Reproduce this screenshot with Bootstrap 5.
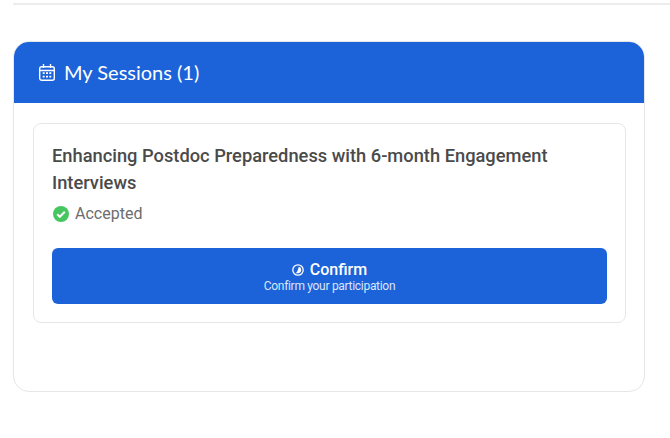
<!doctype html>
<html lang="en">

<head>
  <meta charset="utf-8">
  <meta name="viewport" content="width=device-width, initial-scale=1">
  <title>My Sessions</title>
  <link href="https://cdn.jsdelivr.net/npm/bootstrap@5.3.3/dist/css/bootstrap.min.css" rel="stylesheet">
  <style>
    body {
      font-family: "Roboto", "Liberation Sans", sans-serif;
      color: #4a4a4a;
      background: #fff;
      overflow: hidden;
    }

    .top-rule {
      height: 2px;
      margin: 3px 0 36px 13px;
      background: #ececec;
    }

    .sessions-card {
      width: 632px;
      height: 351px;
      margin-left: 13px;
      border: 1.5px solid #e6e6e6;
      border-radius: 16px;
      overflow: hidden;
    }

    .sessions-head {
      height: 61px;
      padding-left: 25px;
      background: #1c62d9;
      color: #fff;
      font-family: "Lato", "Liberation Sans", sans-serif;
      font-size: 20px;
      gap: 9px;
    }

    .sessions-head span {
      padding-bottom: 2px;
    }

    .session-item {
      margin: 20px 18px 0 19px;
      padding: 18px;
      border: 1.5px solid #e6e6e6;
      border-radius: 8px;
    }

    .session-title {
      margin: 0;
      font-size: 18.3px;
      line-height: 27px;
      font-weight: 500;
      color: #4a4a4a;
    }

    .session-status {
      margin-top: 5px;
      margin-bottom: 21px;
      padding-left: 1px;
      gap: 6px;
      font-size: 16px;
      line-height: 26px;
      color: #6d6d6d;
    }

    .confirm-btn {
      height: 56px;
      padding: 2px 0 0;
      background: #1c62d9;
      border: 0;
      border-radius: 6px;
      color: #fff;
      line-height: 1;
    }

    .confirm-btn:hover {
      background: #1c62d9;
      color: #fff;
    }

    .confirm-main {
      gap: 6px;
      padding-top: 4px;
      font-size: 16px;
      font-weight: 500;
      line-height: 16px;
    }

    .confirm-sub {
      margin-bottom: 2px;
      font-size: 12px;
      letter-spacing: -.3px;
      line-height: 16px;
      color: #dbe6fa;
    }
  </style>
</head>

<body>
  <div class="top-rule"></div>

  <div class="sessions-card bg-white">
    <div class="sessions-head d-flex align-items-center">
      <svg width="16" height="17" viewBox="0 0 16 17" fill="none" stroke="#fff" stroke-width="1.4">
        <rect x=".7" y="2.7" width="14.6" height="13.6" rx="2"></rect>
        <path d="M.7 6.5h14.6M4.5 0v4M11.5 0v4"></path>
        <path d="M3.7 9.2h2M7 9.2h2M10.3 9.2h2M3.7 12.6h2M7 12.6h2M10.3 12.6h2" stroke-width="1.8"></path>
      </svg>
      <span>My Sessions (1)</span>
    </div>

    <div class="session-item">
      <h5 class="session-title">Enhancing Postdoc Preparedness with 6-month Engagement Interviews</h5>
      <div class="session-status d-flex align-items-center">
        <svg width="16" height="16" viewBox="0 0 16 16">
          <circle cx="8" cy="8" r="8" fill="#45c65f"></circle>
          <path d="M4.2 8.3l2.6 2.5 5-5" fill="none" stroke="#fff" stroke-width="2"></path>
        </svg>
        <span>Accepted</span>
      </div>
      <button type="button" class="btn confirm-btn w-100 d-flex flex-column justify-content-center align-items-center">
        <span class="confirm-main d-flex align-items-center">
          <svg width="12" height="12" viewBox="0 0 12 12">
            <circle cx="6" cy="6" r="5.2" fill="none" stroke="#fff" stroke-width="1.3"></circle>
            <path d="M6.8 2.8a3.3 3.3 0 0 1 0 6.4H3.2a3.6 3.6 0 0 0 2.4-2.6z" fill="#fff"></path>
          </svg>
          Confirm
        </span>
        <span class="confirm-sub">Confirm your participation</span>
      </button>
    </div>
  </div>

  <script src="https://cdn.jsdelivr.net/npm/bootstrap@5.3.3/dist/js/bootstrap.bundle.min.js"></script>
</body>

</html>
